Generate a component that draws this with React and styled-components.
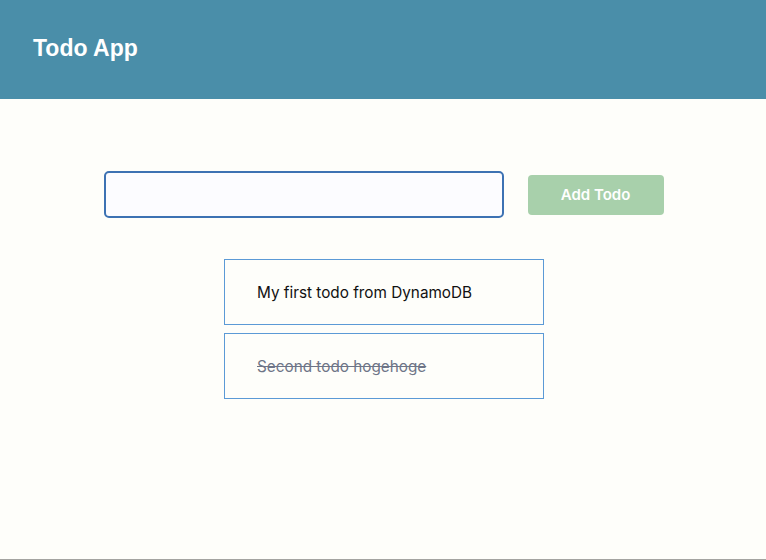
import React, { useState } from "react";
import styled, { createGlobalStyle } from "styled-components";

const GlobalStyle = createGlobalStyle`
  html, body {
    margin: 0;
    padding: 0;
    background: #fefefa;
    font-family: Inter, "Liberation Sans", Arial, sans-serif;
  }
`;

const todos = [
  { id: 1, title: "My first todo from DynamoDB", done: false },
  { id: 2, title: "Second todo hogehoge", done: true },
];

const App = () => {
  const [text, setText] = useState("");

  return (
    <>
      <GlobalStyle />
      <Page>
        <Header>
          <Title>Todo App</Title>
        </Header>

        <Main>
          <Form onSubmit={(e) => e.preventDefault()}>
            <Input value={text} onChange={(e) => setText(e.target.value)} />
            <AddButton type="submit" disabled={!text}>
              Add Todo
            </AddButton>
          </Form>

          <List>
            {todos.map((t) => (
              <Item key={t.id}>
                <ItemText done={t.done}>{t.title}</ItemText>
              </Item>
            ))}
          </List>
        </Main>
      </Page>
    </>
  );
};

const Page = styled.div`
  min-height: 560px;
  box-sizing: border-box;
  border-bottom: 1px solid #a4a4a0;
  display: flex;
  flex-direction: column;
`;

const Header = styled.header`
  height: 99px;
  background: #4a8ea9;
  display: flex;
  align-items: center;
  padding: 0 33px;
  box-sizing: border-box;
`;

const Title = styled.h1`
  margin: 0;
  color: #ffffff;
  font-family: "Liberation Sans", Arial, sans-serif;
  font-size: 23px;
  font-weight: 700;
  padding-bottom: 2px;
`;

const Main = styled.main`
  display: flex;
  flex-direction: column;
  align-items: center;
  padding-top: 72px;
  padding-left: 2px;
`;

const Form = styled.form`
  display: flex;
  align-items: center;
  gap: 24px;
  margin-bottom: 41px;
  margin-left: -1px;
`;

const Input = styled.input`
  width: 400px;
  height: 47px;
  box-sizing: border-box;
  border: 2px solid #3d72b3;
  border-radius: 5px;
  background: #fcfcff;
  outline: none;
  padding: 0 12px;
  font-size: 16px;
  font-family: inherit;
`;

const AddButton = styled.button`
  width: 136px;
  height: 40px;
  border: none;
  border-radius: 4px;
  background: #a8d0ab;
  color: #ffffff;
  font-family: inherit;
  font-size: 15px;
  font-weight: 600;
  cursor: pointer;
  &:disabled {
    cursor: default;
  }
`;

const List = styled.ul`
  list-style: none;
  margin: 0;
  padding: 0;
  display: flex;
  flex-direction: column;
  gap: 8px;
`;

const Item = styled.li`
  width: 320px;
  height: 66px;
  box-sizing: border-box;
  border: 1px solid #5b9ad6;
  display: flex;
  align-items: center;
  padding: 0 32px;
`;

const ItemText = styled.span`
  font-size: 15.3px;
  color: ${(p) => (p.done ? "#6e7587" : "#111111")};
  text-decoration: ${(p) => (p.done ? "line-through" : "none")};
`;

export default App;
